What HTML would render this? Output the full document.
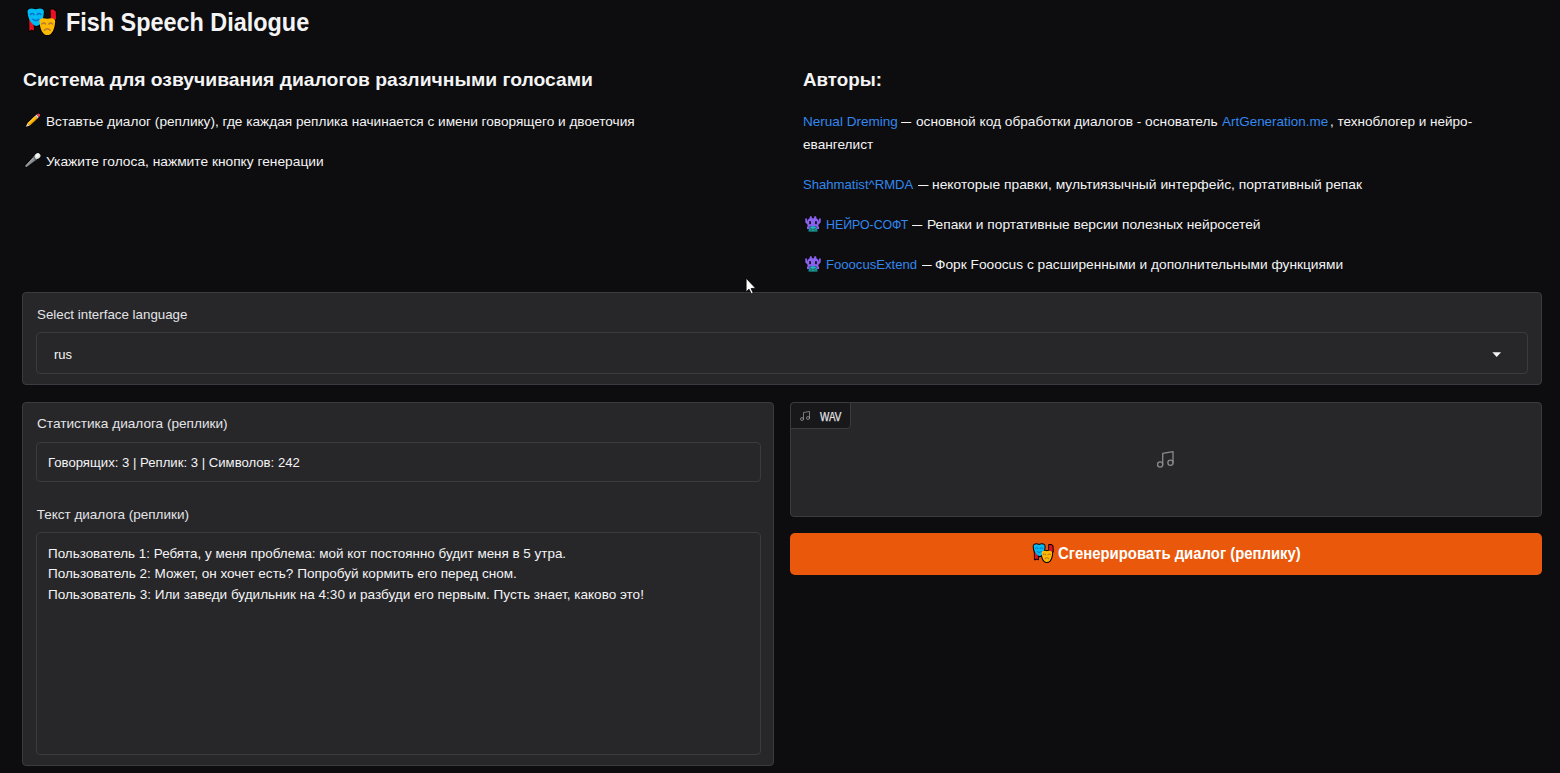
<!DOCTYPE html><html><head><meta charset="utf-8"><title>Fish Speech Dialogue</title><style>
html,body{margin:0;padding:0}
body{width:1560px;height:773px;overflow:hidden;position:relative;background:#0d0d0f;font-family:"Liberation Sans",sans-serif;color:#f4f4f5}
.t{position:absolute;white-space:nowrap;line-height:1;transform-origin:0 0;display:block}
#wv{-webkit-text-stroke:0.25px #e4e4e7}
.box{position:absolute;box-sizing:border-box;background:#27272a;border:1px solid #3a3a40}
svg{position:absolute;overflow:visible}
</style></head><body>
<!-- panels -->
<div class="box" style="left:22px;top:292px;width:1520px;height:93px;border-radius:4px"></div>
<div class="box" style="left:36px;top:332px;width:1492px;height:42px;border-radius:4px"></div>
<div class="box" style="left:22px;top:402px;width:752px;height:364px;border-radius:4px"></div>
<div class="box" style="left:36px;top:442px;width:725px;height:40px;border-radius:4px"></div>
<div class="box" style="left:36px;top:532px;width:725px;height:223px;border-radius:4px"></div>
<div class="box" style="left:790px;top:402px;width:752px;height:115px;border-radius:4px"></div>
<div class="box" style="left:790px;top:402px;width:61px;height:27px;border-radius:4px 0 4px 0;background:#18181b"></div>
<div style="position:absolute;left:790px;top:533px;width:752px;height:41.5px;border-radius:5px;background:#ea580c"></div>
<!-- svg defs -->
<svg width="0" height="0" style="left:0;top:0"><defs>
<g id="masks">
 <g stroke="#000" style="stroke-width:var(--sw,1.6px)" stroke-linejoin="round" fill="#000">
  <path d="M7.2,16.5 L11.6,22.5 L12,28.8 L9.8,27.6 L7.4,29 Z"/>
  <path d="M28.6,7.6 L31.6,7.4 L33.8,9.4 L34.1,17.5 L28.8,17 Z"/>
  <path d="M5.5,10 C5.2,6.7 8.6,5.6 13.7,7.3 C18.8,5.6 22.2,6.7 21.9,10 C21.6,15.4 20.4,19.8 17.6,22.6 C15.8,24.3 13,24.4 11.4,22.8 C7.8,19.8 5.8,15.4 5.5,10 Z"/>
  <path d="M17.5,19.6 C17.2,16.4 20.6,15.4 25.3,16.7 C30,15.4 33.5,16.4 33.2,19.6 C32.9,24.6 31.8,28.8 29.2,31.6 C27.3,33.6 23.4,33.6 21.5,31.6 C18.9,28.8 17.8,24.6 17.5,19.6 Z"/>
 </g>
 <path fill="#e81123" d="M7.2,16.5 L11.6,22.5 L12,28.8 L9.8,27.6 L7.4,29 Z"/>
 <path fill="#e81123" d="M28.6,7.6 L31.6,7.4 L33.8,9.4 L34.1,17.5 L28.8,17 Z"/>
 <path fill="#00bcf2" d="M5.5,10 C5.2,6.7 8.6,5.6 13.7,7.3 C18.8,5.6 22.2,6.7 21.9,10 C21.6,15.4 20.4,19.8 17.6,22.6 C15.8,24.3 13,24.4 11.4,22.8 C7.8,19.8 5.8,15.4 5.5,10 Z"/>
 <path fill="#ffb900" d="M17.5,19.6 C17.2,16.4 20.6,15.4 25.3,16.7 C30,15.4 33.5,16.4 33.2,19.6 C32.9,24.6 31.8,28.8 29.2,31.6 C27.3,33.6 23.4,33.6 21.5,31.6 C18.9,28.8 17.8,24.6 17.5,19.6 Z"/>
 <g fill="none" stroke-linecap="round" stroke-width="1.5">
  <path stroke="#0a6fcf" d="M8.4,12.6 Q10.2,10.6 12,12.6 M15.2,12.6 Q17,10.6 18.8,12.6 M10.9,17.2 Q13.8,19.9 16.6,17.2"/>
  <path stroke="#b57a38" d="M19.8,22 Q21.6,20 23.6,22 M26.8,22 Q28.7,20 30.6,22 M22.4,28.2 Q25.3,25.2 28.2,28.2"/>
 </g>
</g>
<g id="alien">
 <path fill="#8b62ef" d="M5,0.3 L6.6,0.3 L7,2.3 L9,2.3 L9.4,0.3 L11,0.3 L11.6,2.6 L13,3.4 L13.6,5.6 L14,2.4 L15.8,2.4 L15.6,6.6 L13.6,8.6 L13.2,10.4 L14,10.4 L14,13 L11.6,13 L11.4,10.6 L4.6,10.6 L4.4,13 L2,13 L2,10.4 L2.8,10.4 L2.4,8.6 L0.4,6.6 L0.2,2.4 L2,2.4 L2.4,5.6 L3,3.4 L4.4,2.6 Z"/>
 <rect x="4.2" y="5.2" width="1.7" height="3" fill="#0b0b0d"/><rect x="10.1" y="5.2" width="1.7" height="3" fill="#0b0b0d"/>
 <path fill="#19b7c9" d="M5,11 L7,10.2 L9,10.2 L11,11 L12.4,14 L12.4,15.6 L3.6,15.6 L3.6,14 Z"/>
 <rect x="6.2" y="12" width="1" height="3" fill="#2a7d3a"/><rect x="8.8" y="12" width="1" height="3" fill="#2a7d3a"/><rect x="4.6" y="13.6" width="0.8" height="1.2" fill="#0b0b0d"/><rect x="10.6" y="13.6" width="0.8" height="1.2" fill="#0b0b0d"/><rect x="7.6" y="13.2" width="0.8" height="1" fill="#0b0b0d"/><rect x="5.4" y="12" width="0.6" height="0.8" fill="#0b0b0d"/><rect x="10" y="12" width="0.6" height="0.8" fill="#0b0b0d"/>
</g>
<g id="music" fill="none" stroke="currentColor" stroke-width="1.5" stroke-linecap="round" stroke-linejoin="round">
 <path d="M9 18V5l12-2v13"/><circle cx="6" cy="18" r="3"/><circle cx="18" cy="16" r="3"/>
</g>
</defs></svg>
<!-- title masks: region origin (22,2) -->
<svg style="left:22px;top:2px" width="40" height="38" viewBox="0 0 40 38"><use href="#masks"/></svg>
<!-- button masks 19px: target x 1033-1052.3, y 543.8-562.7 ; source ink x 5-34.5,y 5.8-33.8 -->
<svg style="left:1029.6px;top:539.9px;--sw:3px" width="26.7" height="25.4" viewBox="0 0 40 38"><use href="#masks"/></svg>
<!-- pencil -->
<svg style="left:24px;top:111px" width="18" height="18" viewBox="0 0 18 18">
 <g transform="rotate(-43 9 9) translate(0.6 0.2)">
  <path d="M-1.8,9 L2.2,7.3 L15.6,7.3 Q17.4,7.3 17.4,9 Q17.4,10.7 15.6,10.7 L2.2,10.7 Z" fill="#000" stroke="#000" stroke-width="1" stroke-linejoin="round"/>
  <path d="M-1.8,9 L2.2,7.3 L2.2,10.7 Z" fill="#f2d9b0"/>
  <path d="M-1.8,9 L-0.4,8.4 L-0.4,9.6 Z" fill="#555"/>
  <rect x="2.2" y="7.3" width="10.8" height="3.4" fill="#ffb900"/>
  <rect x="2.2" y="7.3" width="10.8" height="1.1" fill="#ffc83d"/>
  <rect x="2.2" y="9.6" width="10.8" height="1.1" fill="#e39b00"/>
  <rect x="13" y="7.3" width="1.7" height="3.4" fill="#dcdcdc"/>
  <path d="M14.7,7.3 L15.6,7.3 Q17.4,7.3 17.4,9 Q17.4,10.7 15.6,10.7 L14.7,10.7 Z" fill="#ef3e5b"/>
 </g>
</svg>
<!-- microphone -->
<svg style="left:24px;top:151px" width="18" height="18" viewBox="0 0 18 18">
 <g transform="rotate(-42 9 9) translate(0.8 0.1)">
  <path d="M-1.6,8.1 L11.6,6.9 L11.6,11.1 L-1.6,9.9 Z" fill="#000" stroke="#000" stroke-width="1" stroke-linejoin="round"/>
  <ellipse cx="14.2" cy="9" rx="3.1" ry="2.7" fill="#000" stroke="#000" stroke-width="1"/>
  <path d="M-1.6,8.1 L11.6,6.9 L11.6,11.1 L-1.6,9.9 Z" fill="#85888c"/>
  <path d="M-1.6,8.1 L11.6,6.9 L11.6,8.2 L-1.6,8.7 Z" fill="#a4a7ab"/>
  <rect x="10.2" y="6.7" width="1.6" height="4.6" fill="#5a5d61"/>
  <ellipse cx="14.2" cy="9" rx="3.1" ry="2.7" fill="#dedede"/>
  <ellipse cx="14.6" cy="8.4" rx="1.9" ry="1.5" fill="#f6f6f6"/>
 </g>
</svg>
<!-- aliens -->
<svg style="left:804.8px;top:215.6px" width="16" height="16" viewBox="0 0 16 16"><use href="#alien"/></svg>
<svg style="left:804.8px;top:255.6px" width="16" height="16" viewBox="0 0 16 16"><use href="#alien"/></svg>
<!-- music icons -->
<svg style="left:799.2px;top:409.6px;color:#98989e" width="12" height="12" viewBox="0 0 24 24"><use href="#music"/></svg>
<svg style="left:1155.3px;top:449.15px;color:#8b8b8e" width="20.6" height="20.6" viewBox="0 0 24 24"><use href="#music"/></svg>
<!-- dropdown arrow -->
<svg style="left:1491.7px;top:351.7px" width="9.4" height="5.6" viewBox="0 0 10 6"><path d="M0.3,0.3 L9.7,0.3 L5,5.4 Z" fill="#f4f4f5"/></svg>
<!-- mouse cursor -->
<svg style="left:744px;top:276px" width="14" height="20" viewBox="0 0 14 20"><path d="M2.1,2.2 L2.1,15.9 L5,13.2 L7.4,17.9 L9.3,17 L7.1,12.5 L11.6,12.2 Z" fill="#fff" stroke="#000" stroke-width="0.8" stroke-linejoin="miter"/></svg>

<div class="t" id="h1" style="left:66.20px;top:8.79px;font-size:26px;font-weight:700;color:#f4f4f5;transform:scaleX(0.9000)">Fish Speech Dialogue</div>
<div class="t" id="h2" style="left:23.30px;top:69.72px;font-size:19px;font-weight:700;color:#f4f4f5;transform:scaleX(1.0166)">Система для озвучивания диалогов различными голосами</div>
<div class="t" id="p1" style="left:46.30px;top:114.87px;font-size:13.5px;font-weight:400;color:#f4f4f5;transform:scaleX(1.0098)">Вставтье диалог (реплику), где каждая реплика начинается с имени говорящего и двоеточия</div>
<div class="t" id="p2" style="left:46.30px;top:154.87px;font-size:13.5px;font-weight:400;color:#f4f4f5;transform:scaleX(1.0191)">Укажите голоса, нажмите кнопку генерации</div>
<div class="t" id="a0" style="left:802.50px;top:69.67px;font-size:19px;font-weight:700;color:#f4f4f5;transform:scaleX(0.9877)">Авторы:</div>
<div class="t" id="r1a" style="left:803.00px;top:114.57px;font-size:13.5px;font-weight:400;color:#3387ee;transform:scaleX(1.0037)">Nerual Dreming</div>
<div class="t" id="r1b0" style="left:901.00px;top:114.57px;font-size:13.5px;font-weight:400;color:#f4f4f5;transform:scaleX(0.7469)">—</div>
<div class="t" id="r1b" style="left:915.50px;top:114.57px;font-size:13.5px;font-weight:400;color:#f4f4f5;transform:scaleX(1.0143)">основной код обработки диалогов - основатель</div>
<div class="t" id="r1c" style="left:1221.50px;top:114.57px;font-size:13.5px;font-weight:400;color:#3387ee;transform:scaleX(0.9965)">ArtGeneration.me</div>
<div class="t" id="r1d" style="left:1330.40px;top:114.57px;font-size:13.5px;font-weight:400;color:#f4f4f5;transform:scaleX(1.0022)">, техноблогер и нейро-</div>
<div class="t" id="r2" style="left:803.00px;top:138.27px;font-size:13.5px;font-weight:400;color:#f4f4f5;transform:scaleX(1.0108)">евангелист</div>
<div class="t" id="r3a" style="left:803.00px;top:178.32px;font-size:13.5px;font-weight:400;color:#3387ee;transform:scaleX(0.9709)">Shahmatist^RMDA</div>
<div class="t" id="r3b0" style="left:917.50px;top:178.32px;font-size:13.5px;font-weight:400;color:#f4f4f5;transform:scaleX(0.7706)">—</div>
<div class="t" id="r3b" style="left:932.00px;top:178.32px;font-size:13.5px;font-weight:400;color:#f4f4f5;transform:scaleX(1.0249)">некоторые правки, мультиязычный интерфейс, портативный репак</div>
<div class="t" id="r4a" style="left:825.50px;top:217.82px;font-size:13.5px;font-weight:400;color:#3387ee;transform:scaleX(0.9152)">НЕЙРО-СОФТ</div>
<div class="t" id="r4b0" style="left:912.00px;top:217.82px;font-size:13.5px;font-weight:400;color:#f4f4f5;transform:scaleX(0.7563)">—</div>
<div class="t" id="r4b" style="left:926.50px;top:217.82px;font-size:13.5px;font-weight:400;color:#f4f4f5;transform:scaleX(1.0190)">Репаки и портативные версии полезных нейросетей</div>
<div class="t" id="r5a" style="left:825.50px;top:257.82px;font-size:13.5px;font-weight:400;color:#3387ee;transform:scaleX(0.9708)">FooocusExtend</div>
<div class="t" id="r5b0" style="left:921.50px;top:257.82px;font-size:13.5px;font-weight:400;color:#f4f4f5;transform:scaleX(0.7145)">—</div>
<div class="t" id="r5b" style="left:935.00px;top:257.82px;font-size:13.5px;font-weight:400;color:#f4f4f5;transform:scaleX(1.0161)">Форк Fooocus с расширенными и дополнительными функциями</div>
<div class="t" id="l1" style="left:36.50px;top:308.07px;font-size:13.5px;font-weight:400;color:#e4e4e7;transform:scaleX(0.9875)">Select interface language</div>
<div class="t" id="v1" style="left:53.70px;top:347.77px;font-size:13.5px;font-weight:400;color:#f4f4f5;transform:scaleX(0.9641)">rus</div>
<div class="t" id="l2" style="left:36.80px;top:417.37px;font-size:13.5px;font-weight:400;color:#e4e4e7;transform:scaleX(1.0074)">Статистика диалога (реплики)</div>
<div class="t" id="v2" style="left:47.80px;top:456.07px;font-size:13.5px;font-weight:400;color:#f4f4f5;transform:scaleX(0.9737)">Говорящих: 3 | Реплик: 3 | Символов: 242</div>
<div class="t" id="l3" style="left:36.70px;top:508.27px;font-size:13.5px;font-weight:400;color:#e4e4e7;transform:scaleX(1.0000)">Текст диалога (реплики)</div>
<div class="t" id="t1" style="left:47.80px;top:547.07px;font-size:13.5px;font-weight:400;color:#f4f4f5;transform:scaleX(0.9944)">Пользователь 1: Ребята, у меня проблема: мой кот постоянно будит меня в 5 утра.</div>
<div class="t" id="t2" style="left:47.80px;top:567.37px;font-size:13.5px;font-weight:400;color:#f4f4f5;transform:scaleX(1.0019)">Пользователь 2: Может, он хочет есть? Попробуй кормить его перед сном.</div>
<div class="t" id="t3" style="left:47.80px;top:587.57px;font-size:13.5px;font-weight:400;color:#f4f4f5;transform:scaleX(1.0030)">Пользователь 3: Или заведи будильник на 4:30 и разбуди его первым. Пусть знает, каково это!</div>
<div class="t" id="wv" style="left:820.00px;top:411.14px;font-size:12px;font-weight:400;color:#e4e4e7;transform:scaleX(0.8214)">WAV</div>
<div class="t" id="bt" style="left:1057.60px;top:546.26px;font-size:16px;font-weight:700;color:#ffffff;transform:scaleX(0.9299)">Сгенерировать диалог (реплику)</div>
</body></html>
